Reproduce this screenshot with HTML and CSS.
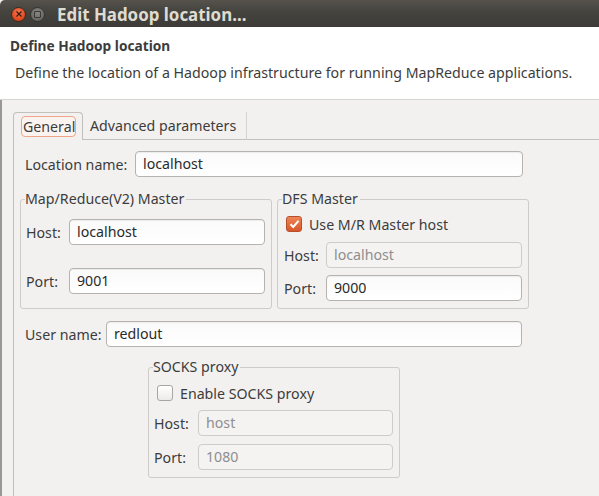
FILE: index.html
```html
<!DOCTYPE html>
<html>
<head>
<meta charset="utf-8">
<link rel="stylesheet" href="styles.css">
</head>
<body>
<div class="titlebar">
  <div class="wbtn close"><svg width="8" height="8" viewBox="0 0 8 8"><path d="M1.5 1.5L6.5 6.5M6.5 1.5L1.5 6.5" stroke="#3a1a10" stroke-width="1.3"/></svg></div>
  <div class="wbtn minbtn"><span class="sq"></span></div>
  <div class="title">Edit Hadoop location...</div>
</div>
<div class="header">
  <div class="h-title">Define Hadoop location</div>
  <div class="h-desc">Define the location of a Hadoop infrastructure for running MapReduce applications.</div>
</div>
<div class="main">
  <div class="tabs">
    <div class="tab active"><span class="focus">General</span></div>
    <div class="tab">Advanced parameters</div>
    <div class="tab-fill"></div>
  </div>
  <div class="panel">
    <div class="row loc">
      <span class="lbl">Location name:</span>
      <div class="input wide-loc">localhost</div>
    </div>
    <div class="groups">
      <div class="group mr">
        <div class="legend">Map/Reduce(V2) Master</div>
        <div class="row g-row first">
          <span class="lbl">Host:</span>
          <div class="input">localhost</div>
        </div>
        <div class="row g-row second">
          <span class="lbl">Port:</span>
          <div class="input">9001</div>
        </div>
      </div>
      <div class="group dfs">
        <div class="legend">DFS Master</div>
        <div class="check-row">
          <span class="cb checked"><svg width="11" height="10" viewBox="0 0 11 10"><path d="M1.5 5.2L4.2 8L9.5 1.8" fill="none" stroke="#fff" stroke-width="2"/></svg></span>
          <span>Use M/R Master host</span>
        </div>
        <div class="row d-row host">
          <span class="lbl">Host:</span>
          <div class="input disabled">localhost</div>
        </div>
        <div class="row d-row port">
          <span class="lbl">Port:</span>
          <div class="input">9000</div>
        </div>
      </div>
    </div>
    <div class="row user">
      <span class="lbl">User name:</span>
      <div class="input wide-user">redlout</div>
    </div>
    <div class="group socks">
      <div class="legend">SOCKS proxy</div>
      <div class="check-row">
        <span class="cb"></span>
        <span>Enable SOCKS proxy</span>
      </div>
      <div class="row d-row host">
        <span class="lbl">Host:</span>
        <div class="input disabled">host</div>
      </div>
      <div class="row d-row port">
        <span class="lbl">Port:</span>
        <div class="input disabled">1080</div>
      </div>
    </div>
  </div>
</div>
</body>
</html>
```

FILE: styles.css
```css
* { box-sizing: border-box; }
html, body { margin: 0; padding: 0; }
body {
  width: 599px;
  height: 496px;
  overflow: hidden;
  background: #f2f1f0;
  font-family: "Noto Sans", "Open Sans", sans-serif;
  font-size: 14.2px;
  color: #3c3c3c;
}
.titlebar {
  height: 27px;
  background: linear-gradient(#56534d, #46443f 40%, #3c3b37);
  display: flex;
  align-items: center;
  padding-left: 11px;
  padding-top: 1px;
  border-top-left-radius: 5px;
}
.wbtn {
  width: 15px;
  height: 15px;
  border-radius: 50%;
  display: flex;
  align-items: center;
  justify-content: center;
  margin-right: 4px;
}
.close {
  background: radial-gradient(circle at 50% 35%, #f47a50, #e0461d 70%);
  border: 1px solid #3a2a22;
}
.minbtn {
  background: radial-gradient(circle at 50% 35%, #8a8782, #6a6762 70%);
  border: 1px solid #35332f;
}
.minbtn .sq {
  width: 7px;
  height: 7px;
  border: 1.3px solid #3a3835;
  border-radius: 1px;
}
.title {
  margin-left: 8px;
  color: #dfdbd2;
  font-weight: bold;
  font-size: 16.9px;
}
.header {
  background: #fff;
  height: 73px;
  border-bottom: 1px solid #d8d5d1;
  padding-left: 10px;
}
.h-title {
  font-weight: bold;
  font-size: 13.7px;
  padding-top: 10px;
  line-height: 18px;
}
.h-desc {
  padding-left: 5px;
  margin-top: 8px;
  line-height: 20px;
}
.main {
  border-left: 2px solid #9a9896;
  height: 396px;
  padding-left: 11px;
  padding-top: 12px;
}
.tabs {
  display: flex;
  height: 28px;
}
.tab {
  height: 28px;
  padding: 0 6px 0 8px;
  display: flex;
  align-items: center;
  border-bottom: 1px solid #c3c0bb;
  border-right: 1px solid #d6d3cf;
}
.tab.active {
  border: 1px solid #c3c0bb;
  border-bottom: none;
  border-radius: 4px 4px 0 0;
  width: 70px;
  padding: 0 0 0 7px;
}
.focus {
  border: 1px solid #f0a58a;
  border-radius: 4px;
  background: #fbf3ef;
  padding: 0 0 0 1px;
  height: 21px;
  line-height: 19px;
  display: block;
}
.tab:nth-child(2) { width: 164px; padding-left: 7px; }
.tab-fill {
  flex: 1;
  border-bottom: 1px solid #c3c0bb;
}
.panel {
  border-left: 1px solid #c3c0bb;
  height: 356px;
  padding-left: 11px;
  padding-top: 11px;
}
.row {
  display: flex;
  align-items: center;
}
.lbl { white-space: nowrap; }
.input {
  height: 26px;
  border: 1px solid #b6b3ae;
  border-radius: 4px;
  background: linear-gradient(#fafafa, #ffffff);
  padding-left: 7px;
  line-height: 24px;
  color: #2a2a2a;
  box-shadow: inset 0 1px 1px rgba(0,0,0,0.06);
}
.input.disabled {
  background: #f4f3f2;
  border-color: #cfccc8;
  color: #8e8e8e;
  box-shadow: none;
}
.loc .lbl { width: 110px; }
.wide-loc { width: 388px; }
.groups {
  display: flex;
  margin-top: 22px;
  margin-left: -5px;
}
.group {
  border: 1px solid #cfccc8;
  border-radius: 3px;
  position: relative;
}
.legend {
  position: absolute;
  top: -10px;
  left: 4px;
  background: #f2f1f0;
  line-height: 18px;
  padding-right: 2px;
}
.mr { width: 252px; height: 110px; padding-left: 5px; }
.mr .g-row.first { margin-top: 19px; }
.mr .g-row.second { margin-top: 23px; }
.mr .lbl { width: 43px; }
.mr .input { width: 196px; }
.dfs { width: 252px; height: 110px; margin-left: 5px; padding-left: 6px; }
.check-row {
  display: flex;
  align-items: center;
  margin-top: 15px;
  margin-left: 2px;
  height: 18px;
}
.cb {
  width: 16px;
  height: 16px;
  border: 1px solid #a9a6a1;
  border-radius: 3px;
  background: linear-gradient(#ffffff, #eceae7);
  margin-right: 7px;
  display: flex;
  align-items: center;
  justify-content: center;
}
.cb.checked {
  background: linear-gradient(#ee8555, #d9572a);
  border-color: #b7502a;
}
.d-row .lbl { width: 42px; }
.d-row .input { width: 196px; }
.dfs .d-row.host { margin-top: 9px; }
.dfs .d-row.port { margin-top: 7px; }
.user { margin-top: 12px; }
.user .lbl { width: 81px; }
.wide-user { width: 416px; }
.socks {
  width: 252px;
  height: 111px;
  margin-top: 20px;
  margin-left: 123px;
  padding-left: 5px;
}
.socks .check-row { margin-top: 16px; margin-left: 3px; }
.socks .d-row .lbl { width: 44px; }
.socks .d-row .input { width: 195px; }
.socks .d-row.host { margin-top: 8px; }
.socks .d-row.port { margin-top: 8px; }
```
